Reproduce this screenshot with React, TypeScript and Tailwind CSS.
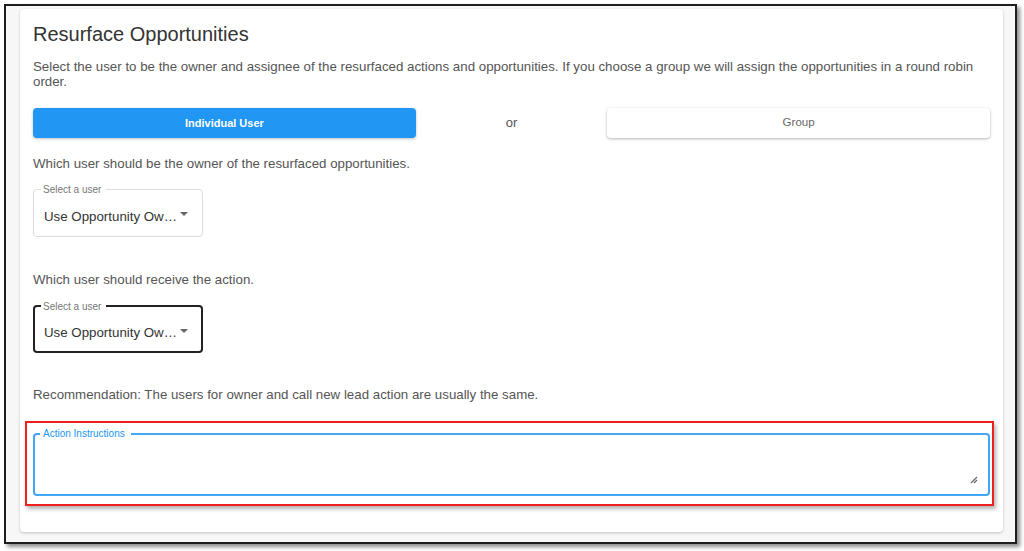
import React from 'react';

const font = { fontFamily: '"Liberation Sans", Arial, sans-serif' };

type UserSelectProps = {
  value: string;
  focused?: boolean;
  className?: string;
};

const UserSelect: React.FC<UserSelectProps> = ({ value, focused, className }) => (
  <div
    className={`relative w-[170px] h-[48px] rounded-[4px] bg-white flex items-center pt-[8px] ${
      focused ? 'border-2 border-[#222] pl-[9px]' : 'border border-[#dcdcdc] pl-[10px]'
    } ${className ?? ''}`}
  >
    {/* notched label */}
    <span
      className={`absolute bg-white pl-[2px] pr-[5px] text-[10px] leading-[12px] text-[#777] ${
        focused ? 'left-[6px] top-[-6px]' : 'left-[7px] top-[-6px]'
      }`}
    >
      Select a user
    </span>
    <span className="text-[13.3px] leading-[16px] text-[#333] whitespace-nowrap">{value}</span>
    <svg
      className={`absolute top-[22px] ${focused ? 'right-[13px]' : 'right-[14px]'}`}
      width="8"
      height="4"
      viewBox="0 0 8 4"
    >
      <path d="M0 0h8L4 4z" fill="#666" />
    </svg>
  </div>
);

const App: React.FC = () => {
  return (
    <div className="w-[1024px] h-[551px] bg-white pt-[4px] pl-[4px]" style={font}>
      <div className="w-[1013px] h-[540px] border-2 border-[#1e1e1e] bg-[#f7f7f7] shadow-[3px_3px_4px_rgba(0,0,0,0.45)] pt-[3px] pl-[14px] pr-[12px] pb-[10px] flex">
        {/* Card */}
        <div className="flex-1 bg-white rounded-[4px] shadow-[0_1px_3px_rgba(0,0,0,0.22)] pt-[13px] px-[13px] pb-[26px] flex flex-col">
          <h1 className="text-[20px] leading-[24px] text-[#333]">Resurface Opportunities</h1>
          <p className="mt-[13px] text-[13.3px] leading-[15px] text-[#555]">
            Select the user to be the owner and assignee of the resurfaced actions and opportunities. If you choose a group we will assign the opportunities in a round robin order.
          </p>

          {/* Toggle */}
          <div className="mt-[19px] flex items-center h-[30px]">
            <button
              type="button"
              className="flex-[2] h-full rounded-[4px] bg-[#2196f3] text-white text-[11px] font-bold shadow-[0_1px_3px_rgba(0,0,0,0.25)]"
            >
              Individual User
            </button>
            <span className="flex-[1] text-center text-[13px] text-[#555]">or</span>
            <button
              type="button"
              className="flex-[2] h-full rounded-[4px] bg-white text-[#666] text-[11.5px] shadow-[0_1px_3px_rgba(0,0,0,0.3)]"
            >
              Group
            </button>
          </div>

          <p className="mt-[18px] text-[13.3px] leading-[15px] text-[#555]">
            Which user should be the owner of the resurfaced opportunities.
          </p>
          <UserSelect value="Use Opportunity Ow…" className="mt-[18px]" />

          <p className="mt-[35px] text-[13.3px] leading-[15px] text-[#555]">
            Which user should receive the action.
          </p>
          <UserSelect value="Use Opportunity Ow…" focused className="mt-[18px]" />

          <p className="mt-[34px] text-[13.3px] leading-[15px] text-[#555]">
            Recommendation: The users for owner and call new lead action are usually the same.
          </p>

          {/* Highlighted field */}
          <div className="mt-[19px] -ml-[8px] -mr-[4px] border-2 border-[#f01e1e] shadow-[2px_3px_4px_rgba(0,0,0,0.3)] pt-[10px] pb-[8px] pl-[6px] pr-[2px]">
            <div className="relative h-[63px] rounded-[4px] border-2 border-[#42a5f5] bg-white">
              <span className="absolute left-[5px] top-[-7px] bg-white pl-[3px] pr-[6px] text-[10px] leading-[12px] text-[#2196f3]">
                Action Instructions
              </span>
              <svg className="absolute right-[10px] bottom-[10px]" width="9" height="9" viewBox="0 0 9 9">
                <path d="M8 2L2 8M8 5L5 8" stroke="#666" strokeWidth="1.2" />
              </svg>
            </div>
          </div>
        </div>
      </div>
    </div>
  );
};

export default App;
